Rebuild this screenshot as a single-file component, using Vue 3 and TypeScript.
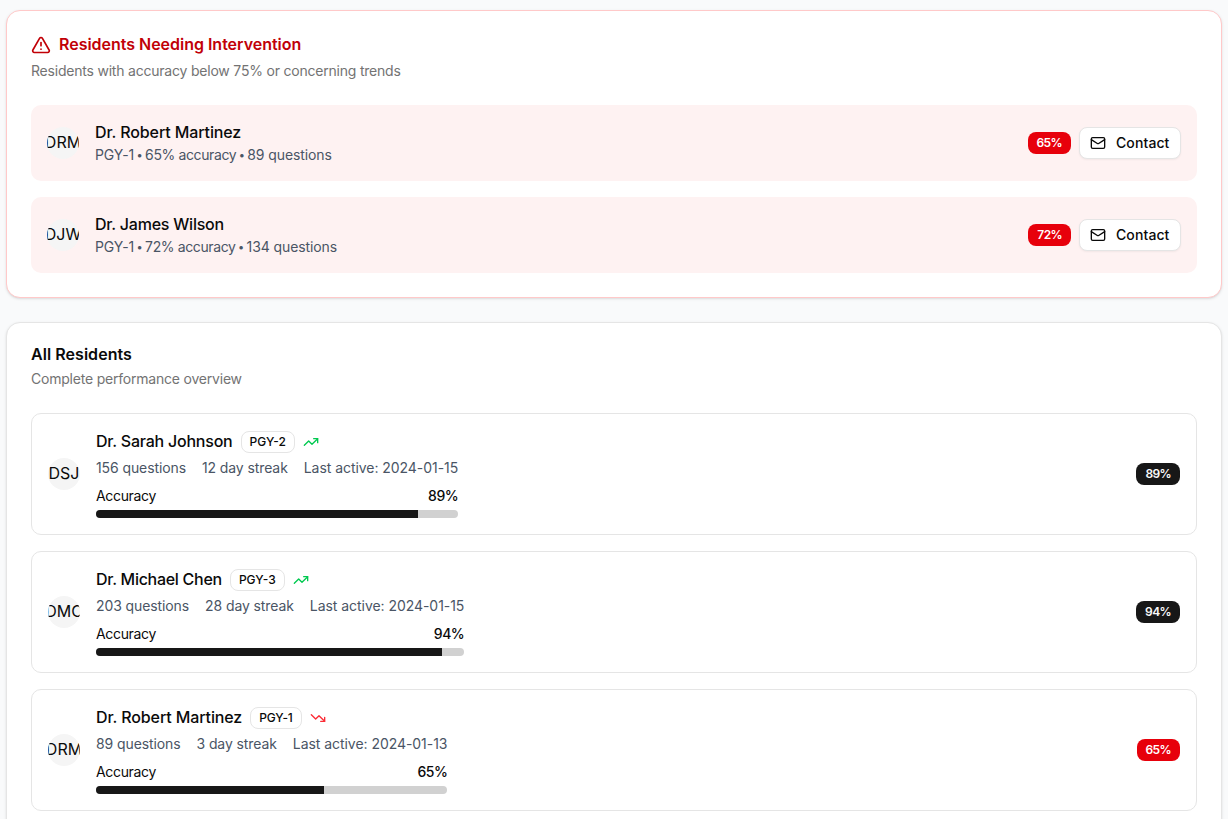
<script setup lang="ts">
interface Alert { initials: string; name: string; level: string; questions: string; score: number }
interface Resident {
  initials: string; name: string; level: string; trend: 'up' | 'down'
  questions: string; streak: string; active: string; score: number
}
const alerts: Alert[] = [
  { initials: 'DRM', name: 'Dr. Robert Martinez', level: 'PGY-1', questions: '89 questions', score: 65 },
  { initials: 'DJW', name: 'Dr. James Wilson', level: 'PGY-1', questions: '134 questions', score: 72 },
]
const residents: Resident[] = [
  { initials: 'DSJ', name: 'Dr. Sarah Johnson', level: 'PGY-2', trend: 'up', questions: '156 questions', streak: '12 day streak', active: 'Last active: 2024-01-15', score: 89 },
  { initials: 'DMC', name: 'Dr. Michael Chen', level: 'PGY-3', trend: 'up', questions: '203 questions', streak: '28 day streak', active: 'Last active: 2024-01-15', score: 94 },
  { initials: 'DRM', name: 'Dr. Robert Martinez', level: 'PGY-1', trend: 'down', questions: '89 questions', streak: '3 day streak', active: 'Last active: 2024-01-13', score: 65 },
]
</script>

<template>
  <main class="page">
    <section class="card card-alert">
      <header class="head">
        <h2 class="title title-alert">
          <svg class="icon20" viewBox="0 0 24 24"><path d="m21.73 18-8-14a2 2 0 0 0-3.48 0l-8 14A2 2 0 0 0 4 21h16a2 2 0 0 0 1.73-3" /><path d="M12 9v4" /><path d="M12 17h.01" /></svg>
          <span class="title-text">Residents Needing Intervention</span>
        </h2>
        <p class="desc">Residents with accuracy below 75% or concerning trends</p>
      </header>
      <div class="list">
        <div v-for="a in alerts" :key="a.initials" class="alert">
          <span class="avatar"><span>{{ a.initials }}</span></span>
          <div class="who">
            <div class="name">{{ a.name }}</div>
            <div class="detail">
              <span>{{ a.level }}</span><span class="dot">•</span><span class="acc">{{ a.score }}% accuracy</span><span class="dot">•</span><span>{{ a.questions }}</span>
            </div>
          </div>
          <div class="actions">
            <span class="badge score red">{{ a.score }}%</span>
            <button class="contact">
              <svg class="icon16" viewBox="0 0 24 24"><path d="m22 7-8.991 5.727a2 2 0 0 1-2.009 0L2 7" /><rect x="2" y="4" width="20" height="16" rx="2" /></svg>
              <span>Contact</span>
            </button>
          </div>
        </div>
      </div>
    </section>

    <section class="card">
      <header class="head">
        <h2 class="title title-all"><span class="title-text">All Residents</span></h2>
        <p class="desc">Complete performance overview</p>
      </header>
      <div class="list">
        <div v-for="r in residents" :key="r.name" class="resident">
          <span class="avatar"><span>{{ r.initials }}</span></span>
          <div class="info">
            <div class="name-row">
              <span class="name">{{ r.name }}</span>
              <span class="badge outline">{{ r.level }}</span>
              <svg class="icon16" :class="r.trend" viewBox="0 0 24 24">
                <template v-if="r.trend === 'up'"><path d="M16 7h6v6" /><path d="m22 7-8.5 8.5-5-5L2 17" /></template>
                <template v-else><path d="M16 17h6v-6" /><path d="m22 17-8.5-8.5-5 5L2 7" /></template>
              </svg>
            </div>
            <div class="stats">
              <span>{{ r.questions }}</span><span>{{ r.streak }}</span><span class="active">{{ r.active }}</span>
            </div>
            <div class="accuracy"><span class="label">Accuracy</span><span class="pct">{{ r.score }}%</span></div>
            <div class="track"><div class="fill" :style="{ width: r.score + '%' }"></div></div>
          </div>
          <span class="badge score" :class="r.score < 75 ? 'red' : 'dark'">{{ r.score }}%</span>
        </div>
      </div>
    </section>
  </main>
</template>

<style>
html, body { margin: 0; background: #f9fafb; overflow: hidden; }
</style>

<style scoped>
.page { box-sizing: border-box; height: 819px; overflow: hidden; padding: 10px 6px 0; display: flex; flex-direction: column; gap: 24px; font-family: Inter, "Liberation Sans", sans-serif; font-size: 16px; line-height: 24px; color: #0a0a0a; white-space: nowrap; }
.page * { box-sizing: border-box; }
svg { fill: none; stroke: currentColor; stroke-width: 2; stroke-linecap: round; stroke-linejoin: round; flex: none; }
.icon20 { width: 20px; height: 20px; }
.icon16 { width: 16px; height: 16px; }
.card { flex: none; background: #fff; border: 1px solid #e5e5e5; border-radius: 14px; padding: 24px; box-shadow: 0 1px 3px rgba(0,0,0,.1), 0 1px 2px -1px rgba(0,0,0,.1); }
.card-alert { border-color: #ffc9c9; }
.head { display: flex; flex-direction: column; gap: 6px; margin-bottom: 24px; }
.title { margin: 0; font-size: 16px; line-height: 14px; font-weight: 600; display: flex; align-items: center; gap: 8px; }
.title-text { padding-bottom: 2px; }
.title-alert { color: #c10007; letter-spacing: -.02px; }
.title-all { letter-spacing: .05px; }
.desc { margin: 0; font-size: 14px; line-height: 20px; color: #737373; letter-spacing: -.21px; }
.list { display: flex; flex-direction: column; gap: 16px; }
.alert { height: 76px; display: flex; align-items: center; gap: 16px; padding: 16px; border-radius: 10px; background: #fef2f2; }
.avatar { width: 32px; height: 32px; border-radius: 50%; overflow: hidden; background: #f5f5f5; display: flex; align-items: center; justify-content: center; flex: none; padding-bottom: 2px; }
.name { font-weight: 500; letter-spacing: -.22px; line-height: 22px; padding-bottom: 2px; }
.alert:first-child .name, .resident:last-child .name { letter-spacing: -.11px; }
.resident:nth-child(2) .name { letter-spacing: -.28px; }
.detail { display: flex; font-size: 14px; line-height: 20px; color: #4a5565; letter-spacing: -.1px; }
.dot { width: 11px; text-align: center; font-size: 11px; }
.acc { letter-spacing: -.38px; }
.actions { margin-left: auto; display: flex; align-items: center; gap: 8px; }
.badge { height: 22px; padding: 0 8px; border: 1px solid transparent; border-radius: 8px; font-size: 12px; line-height: 16px; font-weight: 600; display: flex; align-items: center; justify-content: center; flex: none; }
.score { letter-spacing: -.6px; }
.red { background: #e7000b; color: #fff; }
.dark { background: #171717; color: #fafafa; }
.outline { border-color: #e5e5e5; font-weight: 500; }
.resident:last-child .outline { letter-spacing: -.2px; }
.contact { width: 102px; height: 32px; margin: 0; padding: 0 10px; display: flex; align-items: center; gap: 10px; border: 1px solid #e5e5e5; border-radius: 8px; background: #fff; color: #0a0a0a; font: 500 14px/20px Inter, "Liberation Sans", sans-serif; letter-spacing: .1px; box-shadow: 0 1px 2px rgba(0,0,0,.05); }
.resident { height: 122px; display: flex; align-items: center; gap: 16px; padding: 16px; border: 1px solid #e5e5e5; border-radius: 10px; }
.resident > .badge { margin-left: auto; }
.name-row { display: flex; align-items: center; gap: 8px; height: 24px; }
.stats { margin-top: 4px; display: flex; gap: 16px; font-size: 14px; line-height: 20px; color: #4a5565; letter-spacing: -.1px; }
.active { letter-spacing: -.05px; }
.accuracy { margin: 8px 0 4px; display: flex; justify-content: space-between; font-size: 14px; line-height: 20px; }
.label { letter-spacing: -.33px; }
.pct { font-weight: 500; letter-spacing: -.5px; }
.track { height: 8px; border-radius: 4px; overflow: hidden; background: #d1d1d1; }
.fill { height: 100%; background: #171717; }
.up { color: #00c950; }
.down { color: #fb2c36; }
</style>
